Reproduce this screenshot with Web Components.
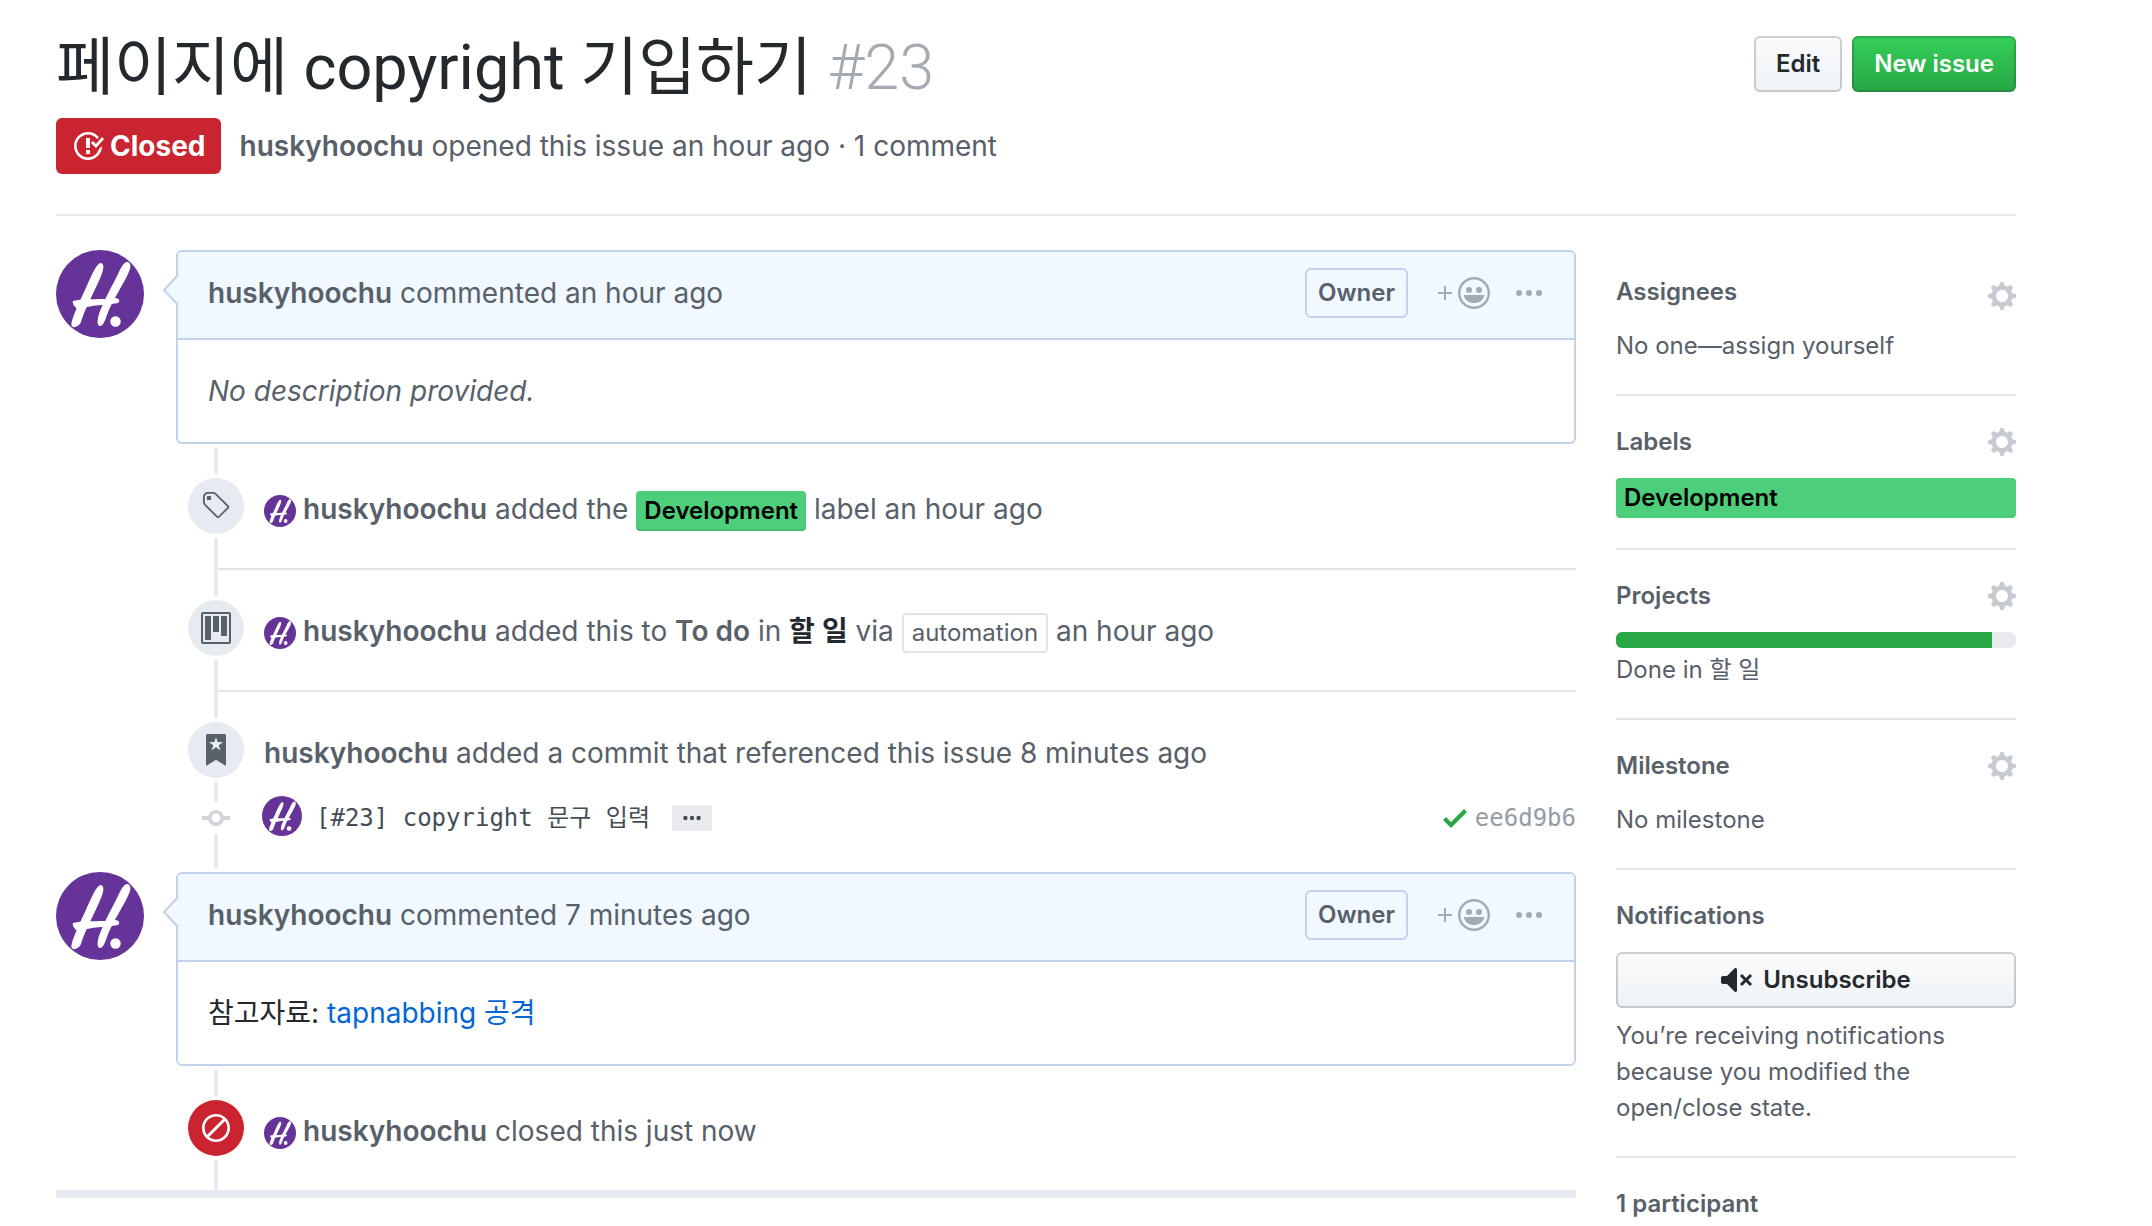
<!DOCTYPE html>
<html lang="en">
<head>
<meta charset="utf-8">
<meta name="viewport" content="width=device-width, initial-scale=1">
<title>페이지에 copyright 기입하기 · Issue #23</title>
<style>
  body {
    margin: 0;
    background: #fff;
    color: #586069;
    font: 400 28px/42px Inter, "Noto Sans CJK KR", sans-serif;
    --line: #e1e4e8;
    --rail: #e6ebf1;
    --ink: #24292e;
    --box: #c0d3eb;
    --box-bg: #f1f8ff;
    --small: 24px;
  }
</style>
</head>
<body>
<issue-page>
  <issue-header slot="header" number="#23" author="huskyhoochu">
    페이지에 copyright 기입하기
    <span slot="meta">opened this issue an hour ago · 1 comment</span>
  </issue-header>

  <issue-comment author="huskyhoochu" when="commented an hour ago"><em>No description provided.</em></issue-comment>

  <timeline-event icon="tag" first separated>
    <user-name avatar>huskyhoochu</user-name> added the <issue-label>Development</issue-label> label an hour ago
  </timeline-event>
  <timeline-event icon="project" separated>
    <user-name avatar>huskyhoochu</user-name> added this to <b>To do</b> in <b style="color:var(--ink)">할 일</b> via <outline-tag>automation</outline-tag> an hour ago
  </timeline-event>
  <timeline-event icon="bookmark" compact>
    <user-name>huskyhoochu</user-name> added a commit that referenced this issue 8 minutes ago
  </timeline-event>
  <commit-row sha="ee6d9b6">[#23] copyright 문구 입력</commit-row>

  <issue-comment author="huskyhoochu" when="commented 7 minutes ago" follows><span style="color:var(--ink)">참고자료: <a href="#tapnabbing" style="color:#0366d6;text-decoration:none">tapnabbing 공격</a></span></issue-comment>

  <timeline-event icon="slash" first closed>
    <user-name avatar>huskyhoochu</user-name> closed this just now
  </timeline-event>

  <side-section slot="side" heading="Assignees" gear lead>No one—assign yourself</side-section>
  <side-section slot="side" heading="Labels" gear><issue-label block>Development</issue-label></side-section>
  <side-section slot="side" heading="Projects" gear><progress-bar value="94"></progress-bar>Done in 할 일</side-section>
  <side-section slot="side" heading="Milestone" gear>No milestone</side-section>
  <side-section slot="side" heading="Notifications"><gh-button block icon="mute">Unsubscribe</gh-button>You’re receiving notifications because you modified the open/close state.</side-section>
  <side-section slot="side" heading="1 participant"></side-section>
</issue-page>

<script>
const ICONS = {
  closed: ['0 0 16 16', '<path fill-rule="evenodd" d="M7 10h2v2H7v-2zm2-6H7v5h2V4zm1.5 1.5l-1 1L12 9l4-4.5-1-1L12 7l-1.5-1.5zM8 13.7A5.71 5.71 0 0 1 2.3 8c0-3.14 2.56-5.7 5.7-5.7 1.83 0 3.45.88 4.5 2.2l.92-.92A6.947 6.947 0 0 0 8 1C4.14 1 1 4.14 1 8s3.14 7 7 7 7-3.14 7-7l-1.52 1.52c-.66 2.41-2.86 4.19-5.48 4.19v-.01z"/>'],
  gear: ['0 0 14 16', '<path fill-rule="evenodd" d="M14 8.77v-1.6l-1.94-.64-.45-1.09.88-1.84-1.13-1.13-1.81.91-1.09-.45-.69-1.92h-1.6l-.63 1.94-1.11.45-1.84-.88-1.13 1.13.91 1.81-.45 1.09L0 7.23v1.59l1.94.64.45 1.09-.88 1.84 1.13 1.13 1.81-.91 1.09.45.69 1.92h1.59l.63-1.94 1.11-.45 1.84.88 1.13-1.13-.92-1.81.47-1.09L14 8.75v.02zM7 11c-1.66 0-3-1.34-3-3s1.34-3 3-3 3 1.34 3 3-1.34 3-3 3z"/>'],
  tag: ['0 0 15 16', '<path fill-rule="evenodd" d="M7.73 1.73C7.26 1.26 6.62 1 5.96 1H3.5C2.13 1 1 2.13 1 3.5v2.47c0 .66.27 1.3.73 1.77l6.06 6.06c.39.39 1.02.39 1.41 0l4.59-4.59a.996.996 0 0 0 0-1.41L7.73 1.73zM2.38 7.09c-.31-.3-.47-.7-.47-1.13V3.5c0-.88.72-1.59 1.59-1.59h2.47c.42 0 .83.16 1.13.47l6.14 6.13-4.73 4.73-6.13-6.15zM3.01 3h2v2H3V3h.01z"/>'],
  project: ['0 0 15 16', '<path fill-rule="evenodd" d="M10 12h3V2h-3v10zm-4-2h3V2H6v8zm-4 4h3V2H2v12zm-1 1h13V1H1v14zM14 0H1a1 1 0 0 0-1 1v14a1 1 0 0 0 1 1h13a1 1 0 0 0 1-1V1a1 1 0 0 0-1-1z"/>'],
  bookmark: ['0 0 10 16', '<path fill-rule="evenodd" d="M9 0H1C.27 0 0 .27 0 1v15l5-3.09L10 16V1c0-.73-.27-1-1-1zm-.78 4.25L6.36 5.61l.72 2.16c.06.22-.02.28-.2.17L5 6.6 3.12 7.94c-.19.11-.25.05-.2-.17l.72-2.16-1.86-1.36c-.17-.16-.14-.23.09-.23l2.3-.03.7-2.16h.25l.7 2.16 2.3.03c.23 0 .27.08.09.23h.01z"/>'],
  commit: ['0 0 14 16', '<path fill-rule="evenodd" d="M10.86 7c-.45-1.72-2-3-3.86-3-1.86 0-3.41 1.28-3.86 3H0v2h3.14c.45 1.72 2 3 3.86 3 1.86 0 3.41-1.28 3.86-3H14V7h-3.14zM7 10.2c-1.22 0-2.2-.98-2.2-2.2 0-1.22.98-2.2 2.2-2.2 1.22 0 2.2.98 2.2 2.2 0 1.22-.98 2.2-2.2 2.2z"/>'],
  slash: ['0 0 14 16', '<path fill-rule="evenodd" d="M7 1C3.14 1 0 4.14 0 8s3.14 7 7 7 7-3.14 7-7-3.14-7-7-7zm0 1.3c1.3 0 2.5.44 3.47 1.17l-8 8A5.755 5.755 0 0 1 1.3 8c0-3.14 2.56-5.7 5.7-5.7zm0 11.41c-1.3 0-2.5-.44-3.47-1.17l8-8c.73.97 1.17 2.17 1.17 3.47 0 3.14-2.56 5.7-5.7 5.7z"/>'],
  check: ['0 0 12 16', '<path d="M12 5l-8 8-4-4 1.5-1.5L4 10l6.5-6.5L12 5z"/>'],
  mute: ['0 0 16 16', '<path d="M8 2.81v10.38c0 .67-.81 1-1.28.53L3 10H1c-.55 0-1-.45-1-1V7c0-.55.45-1 1-1h2l3.72-3.72C7.19 1.81 8 2.14 8 2.81zm7.53 3.22l-1.06-1.06-1.97 1.97-1.97-1.97-1.06 1.06L11.44 8 9.47 9.97l1.06 1.06 1.97-1.97 1.97 1.97 1.06-1.06L13.56 8l1.97-1.97z"/>'],
  plus: ['0 0 7 16', '<path d="M3 4.5h1v3h3v1H4v3H3v-3H0v-1h3z"/>'],
  smiley: ['0 0 16 16', '<circle cx="8" cy="8" r="7.4" fill="none" stroke="currentColor" stroke-width="1.2"/><circle cx="5.5" cy="6.5" r="1.5"/><circle cx="10.5" cy="6.5" r="1.5"/><path d="M3.2 9h9.6c.3 0 .4.2.3.5C12.300 11.700 10.400 13 8 13s-4.300-1.300-5.100-3.500c-.1-.3 0-.5.3-.5z"/>'],
  dots: ['0 0 13 16', '<circle cx="1.5" cy="8" r="1.5"/><circle cx="6.500" cy="8" r="1.5"/><circle cx="11.500" cy="8" r="1.5"/>'],
  more: ['0 0 9 16', '<circle cx="1.200" cy="8" r="1.1"/><circle cx="4.500" cy="8" r="1.1"/><circle cx="7.800" cy="8" r="1.1"/>']
};
const icon = (name) => {
  const [box, body] = ICONS[name];
  const w = Number(box.split(' ')[2]) * 2;
  return `<svg class="icon" width="${w}" height="32" viewBox="${box}" fill="currentColor" aria-hidden="true">${body}</svg>`;
};
const BASE = `:host,*{box-sizing:border-box} .icon{display:block;flex:none} a{color:inherit;text-decoration:none} button{font:inherit;color:inherit;border:0;padding:0;margin:0;background:none;cursor:pointer}`;

const define = (tag, render) => customElements.define(tag, class extends HTMLElement {
  connectedCallback() {
    if (this.shadowRoot) return;
    const root = this.attachShadow({ mode: 'open' });
    const t = document.createElement('template');
    const [css, html] = render(this);
    t.innerHTML = `<style>${BASE}${css}</style>${html}`;
    root.append(t.content.cloneNode(true));
  }
});

define('issue-page', () => [`
  :host{display:block;padding:32px 136px 0 56px}
  .cols{display:flex;gap:40px;align-items:flex-start;padding-top:34px}
  main{flex:1;min-width:0;border-bottom:8px solid var(--rail)}
  aside{flex:none;width:400px}
`, `<slot name="header"></slot>
  <div class="cols"><main><slot></slot></main><aside><slot name="side"></slot></aside></div>`]);

define('issue-header', (el) => [`
  :host{display:block;border-bottom:2px solid #e8eaed;padding-bottom:40px}
  .top{display:flex;justify-content:space-between;align-items:flex-start}
  h1{margin:0;font:400 63px/72px Roboto,"Noto Sans CJK KR",sans-serif;color:var(--ink)}
  h1 span{color:#a3aab1;font-weight:300}
  .actions{display:flex;gap:10px;padding-top:4px}
  .meta{display:flex;align-items:center;gap:18px;margin-top:14px}
  .state{display:flex;align-items:center;gap:6px;height:56px;padding:0 16px;border-radius:6px;background:#cb2431;color:#fff;font-weight:700}
  b{font-weight:600}
`, `<div class="top"><h1><slot></slot> <span>${el.getAttribute('number')}</span></h1>
    <div class="actions"><gh-button>Edit</gh-button><gh-button primary>New issue</gh-button></div></div>
  <div class="meta"><span class="state">${icon('closed')}Closed</span>
    <div><b><a href="#user">${el.getAttribute('author')}</a></b> <slot name="meta"></slot></div></div>`]);

define('gh-button', (el) => [`
  :host{display:block}
  button{display:flex;align-items:center;justify-content:center;gap:10px;width:100%;height:56px;padding:0 20px;border:2px solid rgba(27,31,35,.2);border-radius:6px;
    background:linear-gradient(#fafbfc,#eff3f6) border-box;color:var(--ink);font-size:var(--small);font-weight:600;line-height:36px}
  :host([primary]) button{background:linear-gradient(#34d058,#28a745) border-box;color:#fff}
  :host([block]){margin-bottom:10px}
`, `<button type="button">${el.hasAttribute('icon') ? icon(el.getAttribute('icon')) : ''}<slot></slot></button>`]);

define('user-avatar', () => [`
  :host{display:inline-block;width:32px;height:32px;flex:none}
  svg{display:block;width:100%;height:100%}
`, `<svg viewBox="0 0 88 88" role="img" aria-label="Avatar"><circle cx="44" cy="44" r="44" fill="#663399"/><g fill="#fff">
  <path d="M44.500 13C47 13 48 16 47 20C44 32 30 55 25 72C23 77 16 79 15.500 75C15 70 22 55 29 40C34 29 40 14 44.500 13z"/>
  <path d="M71 12C74 12 75 15 74 19C70 31 56 50 51 65C49 71 47 76 44 76C41 76 41 70 43 64C47 52 56 36 62 24C65 17 68 12 71 12z"/>
  <path d="M17 51C30 48 48 50 60 48C64 49 64 51 62 53C50 55 36 55 22 59C18 57 16 53 17 51z"/>
  <circle cx="59.500" cy="71.500" r="5.200"/></g></svg>`]);

define('user-name', (el) => [`
  :host{font-weight:600}
  user-avatar{vertical-align:middle;margin-right:7px}
`, `${el.hasAttribute('avatar') ? '<user-avatar></user-avatar>' : ''}<a href="#user"><slot></slot></a>`]);

define('issue-label', () => [`
  :host{display:inline-block;height:40px;margin:-4px 0;padding:0 8px;border-radius:4px;background:#4dce7a;color:#000;font-size:var(--small);font-weight:600;line-height:40px;box-shadow:inset 0 -2px 0 rgba(27,31,35,.12)}
  :host([block]){display:block;margin:0;box-shadow:none}
`, `<slot></slot>`]);

define('outline-tag', () => [`
  :host{display:inline-block;height:40px;margin:-4px 0;padding:0 8px;border:2px solid var(--line);border-radius:4px;font-size:var(--small);line-height:36px}
`, `<slot></slot>`]);

define('issue-comment', (el) => [`
  :host{display:grid;grid-template-columns:88px minmax(0,1fr);gap:32px;align-items:start}
  :host([follows]){margin-top:4px}
  user-avatar{width:88px;height:88px}
  .box{position:relative;border:2px solid var(--box);border-radius:6px}
  .arrow{position:absolute;left:-16px;top:22px}
  header{display:flex;align-items:center;min-height:88px;padding:0 32px 4px 30px;background:var(--box-bg);border-bottom:2px solid var(--box);border-radius:4px 4px 0 0}
  header>div{flex:1}
  b{font-weight:600}
  .owner{height:50px;padding:0 11px;border:2px solid var(--box);border-radius:6px;font-size:var(--small);font-weight:600;line-height:46px;margin-right:30px}
  button{display:flex;gap:6px;color:#a3aab1}
  button+button{margin-left:26px}
  .body{padding:30px}
`, `<user-avatar></user-avatar><div class="box">
  <svg class="arrow" width="18" height="32" viewBox="0 0 18 32"><path d="M18 0H16L1 16L16 32H18z" fill="#f1f8ff"/><path d="M16 1L2 16L16 31" fill="none" stroke="#c0d3eb" stroke-width="2"/></svg>
  <header><div><b><a href="#user">${el.getAttribute('author')}</a></b> ${el.getAttribute('when')}</div>
    <span class="owner">Owner</span>
    <button type="button" aria-label="Add reaction">${icon('plus')}${icon('smiley')}</button>
    <button type="button" aria-label="More options">${icon('dots')}</button></header>
  <div class="body"><slot></slot></div></div>`]);

const RAIL = `.rail{display:flex;flex-direction:column;align-items:center;gap:4px}
  .rail i{display:block;width:4px;background:var(--rail)} .rail i:last-child{flex:1}`;

define('timeline-event', (el) => [`${RAIL}
  :host{display:grid;grid-template-columns:56px minmax(0,1fr);gap:20px;margin-left:132px}
  :host([first]){margin-top:4px}
  :host([separated]){background:linear-gradient(var(--line),var(--line)) right bottom/calc(100% - 30px) 2px no-repeat}
  .rail i:first-child{height:26px}
  .badge{display:flex;align-items:center;justify-content:center;width:56px;height:56px;border-radius:50%;background:var(--rail)}
  :host([closed]) .badge{background:#cb2431;color:#fff}
  .text{padding:40px 0 38px}
  :host([separated]) .text{padding-bottom:40px}
  :host([compact]) .text{padding-bottom:22px}
  ::slotted(b){font-weight:600}
`, `<div class="rail"><i></i><span class="badge">${icon(el.getAttribute('icon'))}</span><i></i></div><div class="text"><slot></slot></div>`]);

define('commit-row', (el) => [`${RAIL}
  :host{display:grid;grid-template-columns:56px minmax(0,1fr);gap:18px;height:72px;margin-left:132px}
  .rail{gap:0;color:#d1d5da}
  .rail i:first-child{height:6px}
  .row{display:flex;align-items:center;height:40px;font:var(--small)/36px "DejaVu Sans Mono","Noto Sans CJK KR",monospace;color:#444d56}
  .row>a,.sha{padding-top:4px}
  user-avatar{width:40px;height:40px;margin-right:14px}
  .more{display:flex;align-items:center;justify-content:center;width:40px;height:26px;margin:4px 0 0 22px;background:#e9ebee;color:#444d56;overflow:hidden}
  .sha{display:flex;align-items:center;gap:8px;margin-left:auto;color:#959da5}
  .sha svg{color:#28a745}
`, `<div class="rail"><i></i>${icon('commit')}<i></i></div>
  <div class="row"><user-avatar></user-avatar><a href="#commit"><slot></slot></a><button class="more" type="button" aria-label="Show full message">${icon('more')}</button>
  <span class="sha">${icon('check')}<a href="#sha">${el.getAttribute('sha')}</a></span></div>`]);

define('side-section', (el) => [`
  :host{display:block;padding:28px 0 30px;border-bottom:2px solid var(--line);font-size:var(--small);line-height:36px}
  :host([lead]){padding-top:24px}
  :host(:last-of-type){border-bottom:0;padding-bottom:0}
  .head{display:flex;justify-content:space-between;height:36px;margin-bottom:18px}
  :host([lead]) .head{height:44px;margin-bottom:10px}
  h2{margin:0;font-size:inherit;line-height:36px;font-weight:600}
  button{display:flex;align-items:center;color:#c6cbd1}
`, `<div class="head"><h2>${el.getAttribute('heading')}</h2>${el.hasAttribute('gear') ? `<button type="button" aria-label="Edit ${el.getAttribute('heading')}">${icon('gear')}</button>` : ''}</div><slot></slot>`]);

define('progress-bar', (el) => [`
  :host{display:block;height:16px;margin-bottom:4px;border-radius:6px;background:#e9ebee;overflow:hidden}
  div{height:100%;background:#28a745;width:${el.getAttribute('value')}%}
`, `<div role="progressbar" aria-label="Project progress" aria-valuenow="${el.getAttribute('value')}"></div>`]);
</script>
</body>
</html>
